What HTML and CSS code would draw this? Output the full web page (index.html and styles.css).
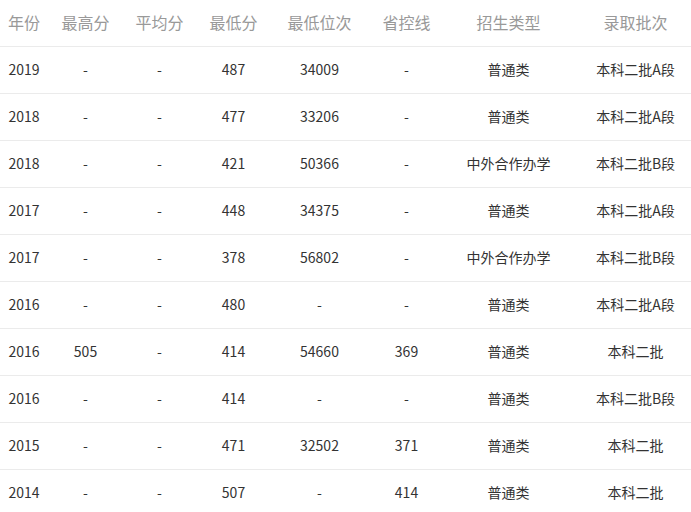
FILE: index.html
```html
<!DOCTYPE html>
<html lang="zh-CN">
<head>
<meta charset="utf-8">
<title>历年分数线</title>
<link rel="stylesheet" href="styles.css">
</head>
<body>
<div class="wrap">
<table class="score-table">
  <colgroup>
    <col class="c1"><col class="c2"><col class="c3"><col class="c4"><col class="c5"><col class="c6"><col class="c7"><col class="c8">
  </colgroup>
  <thead>
    <tr><th>年份</th><th>最高分</th><th>平均分</th><th>最低分</th><th>最低位次</th><th>省控线</th><th>招生类型</th><th>录取批次</th></tr>
  </thead>
  <tbody>
    <tr><td>2019</td><td>-</td><td>-</td><td>487</td><td>34009</td><td>-</td><td>普通类</td><td>本科二批A段</td></tr>
    <tr><td>2018</td><td>-</td><td>-</td><td>477</td><td>33206</td><td>-</td><td>普通类</td><td>本科二批A段</td></tr>
    <tr><td>2018</td><td>-</td><td>-</td><td>421</td><td>50366</td><td>-</td><td>中外合作办学</td><td>本科二批B段</td></tr>
    <tr><td>2017</td><td>-</td><td>-</td><td>448</td><td>34375</td><td>-</td><td>普通类</td><td>本科二批A段</td></tr>
    <tr><td>2017</td><td>-</td><td>-</td><td>378</td><td>56802</td><td>-</td><td>中外合作办学</td><td>本科二批B段</td></tr>
    <tr><td>2016</td><td>-</td><td>-</td><td>480</td><td>-</td><td>-</td><td>普通类</td><td>本科二批A段</td></tr>
    <tr><td>2016</td><td>505</td><td>-</td><td>414</td><td>54660</td><td>369</td><td>普通类</td><td>本科二批</td></tr>
    <tr><td>2016</td><td>-</td><td>-</td><td>414</td><td>-</td><td>-</td><td>普通类</td><td>本科二批B段</td></tr>
    <tr><td>2015</td><td>-</td><td>-</td><td>471</td><td>32502</td><td>371</td><td>普通类</td><td>本科二批</td></tr>
    <tr><td>2014</td><td>-</td><td>-</td><td>507</td><td>-</td><td>414</td><td>普通类</td><td>本科二批</td></tr>
  </tbody>
</table>
</div>
</body>
</html>
```
FILE: styles.css
```css
html, body {
  margin: 0;
  padding: 0;
  background: #fff;
}
body {
  font-family: "Noto Sans CJK SC", "Noto Sans", sans-serif;
  overflow: hidden;
}
.wrap {
  width: 691px;
  overflow: hidden;
}
.score-table {
  width: 699px;
  table-layout: fixed;
  border-collapse: collapse;
  border-spacing: 0;
}
.c1 { width: 48px; }
.c2 { width: 75px; }
.c3 { width: 73px; }
.c4 { width: 75px; }
.c5 { width: 97px; }
.c6 { width: 77px; }
.c7 { width: 127px; }
.c8 { width: 127px; }
.score-table th,
.score-table td {
  height: 44px;
  padding: 0 0 2px;
  text-align: center;
  vertical-align: middle;
  border-bottom: 1px solid #ebebeb;
  white-space: nowrap;
}
.score-table th {
  font-size: 16px;
  font-weight: normal;
  color: #999;
}
.score-table td {
  font-size: 14px;
  color: #333;
}
```
